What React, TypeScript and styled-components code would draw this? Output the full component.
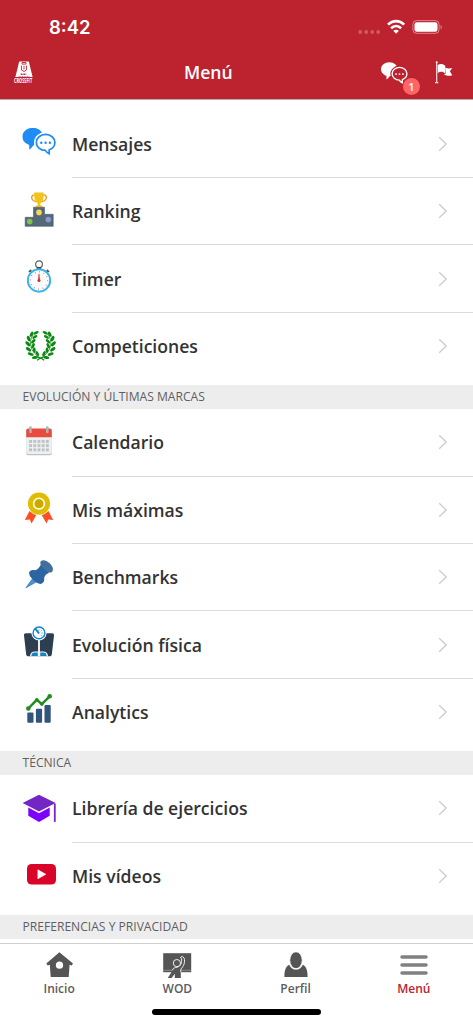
import type { ReactNode } from "react";
import styled, { createGlobalStyle } from "styled-components";

const GlobalStyle = createGlobalStyle`
    * {
        box-sizing: border-box;
    }

    body {
        margin: 0;
        background: #fff;
        font-family: "Open Sans", "Noto Sans", sans-serif;
    }
`

const ChatIcon = ({ color, background }: { color: string; background: string }) => (
    <svg width="34" height="27" viewBox="0 0 34 27">
        <path d="M10.5 0C4.700 0 0 3.900 0 8.900c0 3.200 1.900 5.700 4.900 7.300.7.400 1.300.6 2 .8v4.700c1.900-1.200 3.300-2.900 4.200-4.400 5.500-.3 9.900-4 9.900-8.600C21 3.900 16.300 0 10.500 0z" fill={color}/>
        <path d="M23.300 6.200c5.300 0 9.500 3.700 9.500 8.400 0 3.600-2.500 6.300-6 7.500v3.800c-2-.8-3.300-2-4.200-3.200-5-.2-8.900-3.700-8.900-8.100 0-4.700 4.300-8.400 9.600-8.400z" fill={background} stroke={background} strokeWidth="4"/>
        <path d="M23.300 6.500c5.100 0 9.300 3.600 9.300 8.100 0 3.400-2.300 6.100-5.700 7.300v3.900c-1.800-.8-3.100-2-3.900-3.300-5 0-9-3.500-9-7.900 0-4.500 4.200-8.100 9.300-8.100z" fill={background} stroke={color} strokeWidth="1.700"/>
        <circle cx="19" cy="14.900" r="1.200" fill={color}/>
        <circle cx="23.300" cy="14.900" r="1.200" fill={color}/>
        <circle cx="27.600" cy="14.900" r="1.200" fill={color}/>
    </svg>
)

const MessagesIcon = () => (
    <svg width="40" height="40" viewBox="0 0 40 40">
        <g transform="translate(3.300 3.900)">
            <ChatIcon color="#1e8cf5" background="#fff"/>
        </g>
    </svg>
)

const RankingIcon = () => (
    <svg width="40" height="40" viewBox="0 0 40 40">
        <path d="M16 3.200h-2.200c-2.300 2-1 6 3.400 6.600M24 3.200h2.200c2.300 2 1 6-3.400 6.600" fill="none" stroke="#f39c12" strokeWidth="1.300"/>
        <path d="M15.200.6h9.600c.1 5.600-.8 9.600-3.400 10.600v2.200h1.300c.7.400 1 1 1 1.900h-7.400c0-.9.300-1.500 1-1.900h1.300v-2.200C16 10.200 15.100 6.200 15.200.6z" fill="#f1c41b"/>
        <path d="M6.200 25.300h8.300v-10h11v7h8.700v12h-28z" fill="#546a78" stroke="#465b69" strokeWidth=".6"/>
        <circle cx="20" cy="20.400" r="2.800" fill="#fdd557"/>
        <circle cx="10.700" cy="29.600" r="2.800" fill="#7ec24f"/>
        <circle cx="29.300" cy="27.600" r="2.800" fill="#8c96d4"/>
    </svg>
)

const TimerIcon = () => (
    <svg width="40" height="40" viewBox="0 0 40 40">
        <circle cx="20" cy="5.300" r="3.400" fill="none" stroke="#616161" strokeWidth="1.200"/>
        <path d="M17.800 8h4.400v2.200h-4.400z" fill="#424242"/>
        <path d="M9.900 12.900l2.400-1.900M30.100 12.900l-2.400-1.900M12.200 12.800l-1-1M27.800 12.800l1-1" stroke="#455a64" strokeWidth="1.600"/>
        <circle cx="20" cy="21.500" r="11.200" fill="#fbfbfb" stroke="#3cb3e6" strokeWidth="1.900"/>
        <circle cx="20" cy="21.500" r="8.600" fill="none" stroke="#777" strokeWidth="1.200" strokeDasharray=".7 3.803"/>
        <path d="M19.500 14.800h1l.7 7.500h-2.400z" fill="#e74c3c"/>
        <circle cx="20" cy="21.500" r="1.500" fill="#c0392b"/>
    </svg>
)

const LaurelBranch = () => (
    <g fill="#0b8a12">
        <path d="M16 6.500C9.500 11 9 24 21.500 31" fill="none" stroke="#0b8a12" strokeWidth=".8"/>
        <ellipse cx="17.100" cy="5.700" rx="2.800" ry="1.400" transform="rotate(-24 17.100 5.700)"/>
        <ellipse cx="12.600" cy="7.200" rx="2.800" ry="1.500" transform="rotate(-62 12.600 7.200)"/>
        <ellipse cx="15.900" cy="9.900" rx="2.800" ry="1.400" transform="rotate(-32 15.900 9.900)"/>
        <ellipse cx="9.700" cy="11.600" rx="3" ry="1.600" transform="rotate(65 9.700 11.600)"/>
        <ellipse cx="14.300" cy="14.300" rx="2.800" ry="1.400" transform="rotate(-42 14.300 14.300)"/>
        <ellipse cx="8.900" cy="16.800" rx="3.100" ry="1.600" transform="rotate(48 8.900 16.800)"/>
        <ellipse cx="14" cy="18.800" rx="2.900" ry="1.400" transform="rotate(-62 14 18.800)"/>
        <ellipse cx="9.500" cy="22.300" rx="3.100" ry="1.600" transform="rotate(35 9.500 22.300)"/>
        <ellipse cx="15.300" cy="23.100" rx="2.900" ry="1.400" transform="rotate(88 15.300 23.100)"/>
        <ellipse cx="11.700" cy="27.100" rx="3.100" ry="1.500" transform="rotate(16 11.700 27.100)"/>
        <ellipse cx="18.300" cy="26.600" rx="2.800" ry="1.400" transform="rotate(62 18.300 26.600)"/>
        <ellipse cx="16" cy="30.500" rx="3.100" ry="1.400" transform="rotate(-10 16 30.500)"/>
        <path d="M19 30.300c2 .2 4.200 1.200 6.200 2.900" fill="none" stroke="#0b8a12" strokeWidth="1.200"/>
    </g>
)

const LaurelIcon = () => (
    <svg width="40" height="40" viewBox="0 0 40 40">
        <LaurelBranch/>
        <g transform="matrix(-1 0 0 1 43.300 0)">
            <LaurelBranch/>
        </g>
    </svg>
)

const CalendarIcon = () => (
    <svg width="40" height="40" viewBox="0 0 40 40">
        <rect x="7.200" y="6.500" width="25.600" height="25.700" rx="2" fill="#bdc3c7"/>
        <rect x="7.200" y="6.500" width="25.600" height="24.600" rx="2" fill="#ecf0f1"/>
        <path d="M7.200 14.200V7.500c0-1.100.9-2 2-2h21.600c1.100 0 2 .9 2 2v6.700z" fill="#e74c3c"/>
        {[17, 21.200, 25.400].map((y) =>
            [10.100, 14.300, 18.500, 22.700, 26.900].map((x) => (
                <rect key={`${x}-${y}`} x={x} y={y} width="2.900" height="2.900" fill="#bdc3c7"/>
            ))
        )}
        <rect x="10.200" y="3.300" width="2.600" height="7" rx="1.300" fill="#aab3b8"/>
        <rect x="27" y="3.300" width="2.600" height="7" rx="1.300" fill="#aab3b8"/>
    </svg>
)

const MedalIcon = () => (
    <svg width="40" height="40" viewBox="0 0 40 40">
        <path d="M5.800 30l4.700-9 7 3.800-5 8.800-1.700-4.200zM34.200 30l-4.700-9-7 3.800 5 8.800 1.700-4.200z" fill="#fb5122"/>
        <circle cx="20" cy="13.700" r="11.600" fill="#fff"/>
        <circle cx="20" cy="13.700" r="11.100" fill="#e0bd00"/>
        <circle cx="20" cy="13.700" r="5.400" fill="#e0bd00" stroke="#fff" strokeWidth="1.500"/>
        <circle cx="20" cy="13.700" r="4.100" fill="#cda900"/>
    </svg>
)

const PinIcon = () => (
    <svg width="40" height="40" viewBox="0 0 40 40">
        <path d="M13.500 20l4.500 4L7 30.200l-.6-.5z" fill="#4f8fce"/>
        <path d="M22 6.500l8 8.500c-3.300 1.300-5.200 3.300-4.700 6.600 0 2.400-1.800 4-4 4.400-3.700-.2-11.800-6.900-11.200-11.400.5-2.200 3-3.100 5.600-2.400 2.600-.4 4.500-2.200 6.300-5.700z" fill="#2b66a3"/>
        <path d="M22 3c2-1.600 5.500-.7 8.400 2.100 3 2.700 4.400 6.100 3 8.300-1.100 1.400-3.300 1.400-5.200.5l-6.400-7c-.7-1.600-.6-3 .2-3.900z" fill="#41709f"/>
    </svg>
)

const ScaleIcon = () => (
    <svg width="40" height="40" viewBox="0 0 40 40">
        <path d="M7 8.200h26c1.400 0 2.200.9 2 2.200l-2.200 19c-.2 1.200-.9 1.800-2 1.800H9.200c-1.100 0-1.800-.6-2-1.800L5 10.400C4.800 9.100 5.600 8.200 7 8.200z" fill="#2c3e50"/>
        <circle cx="20" cy="7.900" r="7.600" fill="#fff"/>
        <path d="M19.100 14h1.800v17h-1.800zM11 31.200c0-3.200 2-4.800 5-4.800h8c3 0 5 1.600 5 4.800z" fill="#fff"/>
        <circle cx="20" cy="7.900" r="5.900" fill="#fff" stroke="#1684c4" strokeWidth="1.400"/>
        <path d="M16.300 3.700l3.800 4.800" stroke="#1684c4" strokeWidth="2"/>
        <path d="M19.900 4.500v1.200M22.500 5.300l-.7.900M23.700 8h-1.200M22.500 10.700l-.7-.8" stroke="#1684c4" strokeWidth=".8"/>
        <path d="M12.300 30.900c.3-2.300 1.300-3.300 3-3.300h3.500v3.300zM27.700 30.900c-.3-2.300-1.300-3.300-3-3.300h-3.500v3.300z" fill="#1684c4"/>
    </svg>
)

const AnalyticsIcon = () => (
    <svg width="40" height="40" viewBox="0 0 40 40">
        <rect x="8.300" y="20.500" width="6.200" height="10.200" rx="1" fill="#30557c"/>
        <rect x="16.900" y="16.800" width="6.200" height="13.900" rx="1" fill="#30557c"/>
        <rect x="25.500" y="13.100" width="6.200" height="17.600" rx="1" fill="#30557c"/>
        <path d="M9.300 16.500l8.500-8.700 5 4.300 7.900-7.800" fill="none" stroke="#228b22" strokeWidth="2.500"/>
        <circle cx="9.300" cy="16.500" r="2.300" fill="#228b22"/>
        <circle cx="17.800" cy="7.800" r="1.800" fill="#228b22"/>
        <circle cx="22.800" cy="12.100" r="1.800" fill="#228b22"/>
        <circle cx="30.700" cy="4.200" r="2.300" fill="#228b22"/>
    </svg>
)

const GraduationIcon = () => (
    <svg width="40" height="40" viewBox="0 0 40 40">
        <path d="M9.300 17.500L20 23.300l10.700-5.800v9.300L20 32.900 9.300 26.800z" fill="#7b00ff"/>
        <path d="M5 15l15 8 15-8" fill="none" stroke="#fff" strokeWidth="2"/>
        <path d="M34.900 14.500h1.800v18.400h-1.800z" fill="#7426c4"/>
        <path d="M3.600 14.100L20 5.800l16.600 8.300L20 22.500z" fill="#7426c4"/>
    </svg>
)

const VideoIcon = () => (
    <svg width="40" height="40" viewBox="0 0 40 40">
        <rect x="8" y="7.900" width="29" height="20.700" rx="4.600" fill="#d90429"/>
        <path d="M18.900 13.800v9l7.900-4.500z" fill="#fff" stroke="#fff" strokeWidth=".6" strokeLinejoin="round"/>
    </svg>
)

const ChevronIcon = () => (
    <svg width="10" height="16" viewBox="0 0 10 16">
        <path d="M1.200 1.200L8.200 8l-7 6.800" fill="none" stroke="#cbcbcf" strokeWidth="1.300"/>
    </svg>
)

const LogoIcon = () => (
    <svg width="22" height="28" viewBox="0 0 22 28">
        <path d="M6.200 2.600h9.600L19.600 18H2.400z" fill="#fff"/>
        <path d="M9 3.500h4v1.600H9zM8.300 6.500l.2 4.500 2.500 1.500 2.400-1.500.2-4.500M11 6.800v3.500" fill="none" stroke="#bd222f" strokeWidth=".9"/>
        <path d="M7.700 15.200h5.500" stroke="#bd222f" strokeWidth="1.500" strokeDasharray="1.200 .5"/>
        <path d="M5.500 17.800h11" stroke="#bd222f" strokeWidth=".8" strokeDasharray="1.200 .5"/>
        <text transform="translate(1 24.300) scale(.6 1)" fontFamily="Open Sans, sans-serif" fontWeight="700" fontSize="6.500" fill="#fff">CROSSFIT</text>
    </svg>
)

const FlagIcon = () => (
    <svg width="18" height="23" viewBox="0 0 18 23">
        <path d="M1.700 1.500v20M0 21.600h3.300" stroke="#fff" strokeOpacity=".85" strokeWidth="1.200"/>
        <circle cx="1.700" cy="1.200" r="1" fill="#fff"/>
        <path d="M2.700 4c2.500-1.700 5.600-1 7.500.8v7.700c-2-1.900-4.800-2.200-7.500-.6z" fill="#fff"/>
        <path d="M10.200 6.600c2 1 4.300 1.100 7 .5l-2.300 3.200 2.300 3.900c-2.900.9-5.700.8-8.200-.6l1.700-1z" fill="#fff"/>
    </svg>
)

const StatusIcons = () => (
    <svg width="86" height="16" viewBox="0 0 86 16">
        <g fill="#fff" fillOpacity=".25">
            <circle cx="2.200" cy="13" r="2"/>
            <circle cx="8.200" cy="13" r="2"/>
            <circle cx="14.200" cy="13" r="2"/>
            <circle cx="20.200" cy="13" r="2"/>
        </g>
        <g fill="none" stroke="#fff" strokeWidth="2.600">
            <path d="M30 5.600c4.700-4.600 11.500-4.600 16.200 0"/>
            <path d="M33.100 9.200c3-2.900 7-2.900 10 0"/>
        </g>
        <path d="M35.300 11.800c1.700-1.500 3.900-1.500 5.600 0l-2.800 2.900z" fill="#fff"/>
        <rect x="54.900" y="1.600" width="26.200" height="12.700" rx="3.700" fill="none" stroke="#fff" strokeOpacity=".45"/>
        <rect x="56.500" y="3.200" width="23" height="9.500" rx="2.300" fill="#fff"/>
        <path d="M82.600 5.900c1.500.5 1.500 3.700 0 4.200z" fill="#fff" fillOpacity=".5"/>
    </svg>
)

const HomeIcon = () => (
    <svg width="30" height="28" viewBox="0 0 30 28">
        <path d="M15.400 1.300L29 12.500l-1.300 2-2.100-.7-.9 12.300H6.700l-.9-12.300-2.100.7-1.400-2z" fill="#555"/>
        <circle cx="15.500" cy="14.200" r="3.600" fill="#fff"/>
    </svg>
)

const BoardIcon = () => (
    <svg width="30" height="28" viewBox="0 0 30 28">
        <path d="M1.200 2.200h28v19h-28z" fill="#555"/>
        <path d="M1.200 19.300h28" stroke="#999" strokeWidth=".8"/>
        <path d="M18.600 6l1.700-.8 1.900 1.900c1.100 4-.2 8.200-3.400 11.200v8.600h-6v-4.200l-3.200 4.200H5.800l5.400-8.600c1-1.500 2.400-2.100 4.300-2.100 3.200-.9 4.900-4 4.400-8.600z" fill="#555"/>
        <path d="M10.200 19.200c1.200-2 2.700-2.900 5-3 3.200-.9 5-4.200 4.300-8.800l-1.200-.8 1.900-1.300 1.900 1.700c1.200 4-.2 8.200-3.300 11.200v3" fill="none" stroke="#fff" strokeWidth=".9"/>
        <circle cx="14.900" cy="12.100" r="3.600" fill="#555" stroke="#fff" strokeWidth=".9"/>
    </svg>
)

const PersonIcon = () => (
    <svg width="30" height="28" viewBox="0 0 30 28">
        <path d="M8.200 13.700c1.600 3.600 3.900 4.900 6.800 4.900s5.200-1.300 6.800-4.900c3.600 1.700 4.900 6.300 4.800 12.300H3.400c-.1-6 1.200-10.600 4.800-12.300z" fill="#555"/>
        <ellipse cx="15" cy="9.200" rx="6.300" ry="8.500" fill="#555" stroke="#fff" strokeWidth="1"/>
    </svg>
)

const MenuIcon = () => (
    <svg width="30" height="28" viewBox="0 0 30 28">
        <path d="M3 6.100h24M3 14.100h24M3 22.100h24" stroke="#808080" strokeWidth="3.500" strokeLinecap="round"/>
    </svg>
)

const sections: { title?: string; items: { label: string; icon: ReactNode }[] }[] = [
    {
        items: [
            { label: "Mensajes", icon: <MessagesIcon/> },
            { label: "Ranking", icon: <RankingIcon/> },
            { label: "Timer", icon: <TimerIcon/> },
            { label: "Competiciones", icon: <LaurelIcon/> },
        ],
    },
    {
        title: "EVOLUCIÓN Y ÚLTIMAS MARCAS",
        items: [
            { label: "Calendario", icon: <CalendarIcon/> },
            { label: "Mis máximas", icon: <MedalIcon/> },
            { label: "Benchmarks", icon: <PinIcon/> },
            { label: "Evolución física", icon: <ScaleIcon/> },
            { label: "Analytics", icon: <AnalyticsIcon/> },
        ],
    },
    {
        title: "TÉCNICA",
        items: [
            { label: "Librería de ejercicios", icon: <GraduationIcon/> },
            { label: "Mis vídeos", icon: <VideoIcon/> },
        ],
    },
    { title: "PREFERENCIAS Y PRIVACIDAD", items: [] },
]

const tabs = [
    { label: "Inicio", icon: <HomeIcon/> },
    { label: "WOD", icon: <BoardIcon/> },
    { label: "Perfil", icon: <PersonIcon/> },
    { label: "Menú", icon: <MenuIcon/>, active: true },
]

const App = () => {
    return (
        <Screen>
            <GlobalStyle/>
            <Header>
                <StatusBar>
                    <Time>8:42</Time>
                    <StatusIcons/>
                </StatusBar>
                <NavBar>
                    <LogoIcon/>
                    <Title>Menú</Title>
                    <Actions>
                        <ChatButton>
                            <ChatIcon color="#fff" background="#bd222f"/>
                            <Badge>1</Badge>
                        </ChatButton>
                        <FlagIcon/>
                    </Actions>
                </NavBar>
            </Header>
            <Content>
                {sections.map((section, index) => (
                    <section key={index}>
                        {section.title && <SectionTitle>{section.title}</SectionTitle>}
                        {section.items.length > 0 && (
                            <List>
                                {section.items.map((item) => (
                                    <Row key={item.label}>
                                        <RowIcon>{item.icon}</RowIcon>
                                        <RowBody>
                                            <RowLabel>{item.label}</RowLabel>
                                            <ChevronIcon/>
                                        </RowBody>
                                    </Row>
                                ))}
                            </List>
                        )}
                    </section>
                ))}
            </Content>
            <TabBar>
                <Tabs>
                    {tabs.map((tab) => (
                        <Tab key={tab.label} $active={tab.active}>
                            {tab.icon}
                            <TabLabel>{tab.label}</TabLabel>
                        </Tab>
                    ))}
                </Tabs>
                <HomeIndicator/>
            </TabBar>
        </Screen>
    )
}

export default App

const Screen = styled.div`
    display: flex;
    flex-direction: column;
    width: 473px;
    height: 1024px;
    overflow: hidden;
    background: #fff;
`

const Header = styled.header`
    flex: none;
    height: 100px;
    background: #bd222f;
    border-bottom: 1px solid #b9a9ab;
    color: #fff;
`

const StatusBar = styled.div`
    display: flex;
    justify-content: space-between;
    align-items: center;
    height: 54px;
    padding: 0 29px 0 49px;
`

const Time = styled.span`
    font-family: Inter, sans-serif;
    font-size: 18.500px;
    font-weight: 600;
`

const NavBar = styled.nav`
    display: grid;
    grid-template-columns: 150px 117px 1fr;
    align-items: center;
    height: 37px;
    padding: 0 20px 0 13px;
`

const Title = styled.h1`
    margin: -2px 0 0;
    padding-left: 21px;
    font-size: 17.600px;
    font-weight: 600;
    line-height: 24px;
`

const Actions = styled.div`
    display: flex;
    justify-content: flex-end;
    align-items: center;
    gap: 27px;
`

const ChatButton = styled.div`
    position: relative;
    display: flex;

    > svg {
        width: 27px;
        height: 22px;
    }
`

const Badge = styled.span`
    position: absolute;
    top: 16px;
    left: 22px;
    width: 17px;
    height: 17px;
    border-radius: 50%;
    background: #ff6565;
    font-size: 11px;
    font-weight: 600;
    line-height: 17px;
    text-align: center;
`

const Content = styled.main`
    flex: 1;
    min-height: 0;
    padding-top: 10.700px;
    overflow: hidden;
`

const SectionTitle = styled.h2`
    margin: 0;
    height: 24.300px;
    padding-left: 22.500px;
    background: #ededed;
    color: #5f5f5f;
    font-size: 12.100px;
    font-weight: 400;
    line-height: 24.300px;
`

const List = styled.ul`
    margin: 0;
    padding: 0 0 4.700px;
    list-style: none;
`

const RowBody = styled.div`
    display: flex;
    flex: 1;
    justify-content: space-between;
    align-items: center;
    padding-right: 25px;
    border-bottom: 1px solid #dcdcdc;
`

const Row = styled.li`
    display: flex;
    height: 67.400px;
    padding-left: 19px;

    &:last-child ${RowBody} {
        border-bottom-color: transparent;
    }
`

const RowIcon = styled.div`
    display: flex;
    align-items: center;
    width: 53px;
`

const RowLabel = styled.span`
    color: #333;
    font-size: 17.600px;
    font-weight: 600;
`

const TabBar = styled.footer`
    flex: none;
    height: 81px;
    border-top: 1px solid #cfcfcf;
    background: #fff;
`

const Tabs = styled.div`
    display: flex;
    height: 65px;
    padding-top: 7px;
`

const Tab = styled.div<{ $active?: boolean }>`
    display: flex;
    flex: 1;
    flex-direction: column;
    align-items: center;
    color: ${({ $active }) => ($active ? "#bd222f" : "#5c5c5c")};
`

const TabLabel = styled.span`
    margin-top: 1px;
    font-size: 12px;
    font-weight: 600;
    line-height: 17px;
`

const HomeIndicator = styled.div`
    width: 169px;
    height: 5.500px;
    margin: 0 auto;
    border-radius: 3px;
    background: #000;
`
